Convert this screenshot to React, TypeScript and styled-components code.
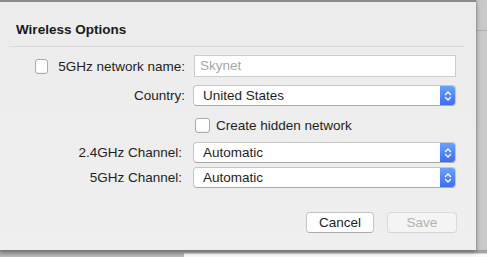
import React from 'react';
import styled, { createGlobalStyle } from 'styled-components';

const GlobalStyle = createGlobalStyle`
  html, body {
    margin: 0;
    padding: 0;
    background: #c6c6c6;
    font-family: "Liberation Sans", Arial, sans-serif;
    -webkit-font-smoothing: antialiased;
  }
`;

const Backdrop = styled.div`
  width: 487px;
  height: 257px;
  display: flex;
  flex-direction: column;
  overflow: hidden;
  background: #c6c6c6;
`;

const TopArea = styled.div`
  display: flex;
  height: 250px;
`;

const SideStrip = styled.div`
  flex: 1;
  border-left: 1px solid #b4b4b4;
  background: #c9c9c9;
`;

const SideRule = styled.div`
  height: 30px;
  border-bottom: 1px solid #aeaeae;
`;

const BottomStrip = styled.div`
  flex: 1;
  display: flex;
  padding-top: 3px;
  padding-left: 184px;
  background: linear-gradient(#9c9c9c, #bcbcbc);
`;

const BehindPanel = styled.div`
  flex: 1;
  background: #fafafa;
  border-top: 1px solid #d0d0d0;
`;

const Sheet = styled.div`
  position: relative;
  z-index: 1;
  width: 476px;
  box-sizing: border-box;
  border-top: 2px solid #8c8c8c;
  background: linear-gradient(#ececec, #efefef);
  box-shadow: 0 2px 5px rgba(0, 0, 0, 0.35);
  display: flex;
  flex-direction: column;
  color: #1e1e1e;
  font-size: 13.5px;
`;

const Title = styled.h2`
  margin: 0;
  padding: 20px 0 0 16px;
  height: 24px;
  font-size: 13.5px;
  font-weight: bold;
  line-height: 16px;
  color: #1a1a1a;
`;

const Divider = styled.hr`
  margin: 0 11px 0 9px;
  border: none;
  border-top: 1px solid #d9d9d9;
  height: 0;
`;

const Form = styled.div`
  display: flex;
  flex-direction: column;
  padding-top: 8px;
`;

const Row = styled.div<{ $gap: number; $h: number }>`
  display: grid;
  grid-template-columns: 185px 263px;
  column-gap: 8px;
  align-items: center;
  height: ${p => p.$h}px;
  margin-top: ${p => p.$gap}px;
`;

const Label = styled.label<{ $pad?: number }>`
  text-align: right;
  white-space: nowrap;
  padding-right: ${p => p.$pad ?? 0}px;
`;

const CheckLabel = styled.label`
  display: flex;
  align-items: center;
  padding-left: 35px;
  gap: 10px;
  white-space: nowrap;
`;

const Box = styled.span`
  display: inline-block;
  width: 13px;
  height: 13px;
  border: 1px solid #ababab;
  border-radius: 3px;
  background: #fff;
  box-shadow: inset 0 -1px 0 #f0f0f0;
`;

const TextInput = styled.div`
  margin-left: 1px;
  height: 22px;
  box-sizing: border-box;
  border: 1px solid #cdcdcd;
  background: #fff;
  padding-left: 5px;
  line-height: 20px;
  color: #a8a8a8;
`;

const Select = styled.div`
  display: flex;
  height: 21px;
  box-sizing: border-box;
  border: 1px solid #c6c6c6;
  border-bottom-color: #a9a9a9;
  border-radius: 4px;
  background: #fff;
  overflow: hidden;
`;

const SelectValue = styled.span`
  flex: 1;
  padding-left: 9px;
  line-height: 19px;
`;

const Stepper = styled.span`
  width: 16px;
  display: flex;
  align-items: center;
  justify-content: center;
  margin: -1px -1px -1px 0;
  border-radius: 0 4px 4px 0;
  background: linear-gradient(#6aa5fc, #3c69f4);
`;

const CheckRow = styled.label`
  display: flex;
  align-items: center;
  gap: 6px;
  padding-left: 2px;
  white-space: nowrap;
`;

const Footer = styled.div`
  display: flex;
  justify-content: flex-end;
  gap: 13px;
  padding: 24px 19px 0 0;
`;

const Button = styled.button<{ $disabled?: boolean }>`
  height: 21px;
  width: ${p => (p.$disabled ? 70 : 68)}px;
  box-sizing: border-box;
  border: 1px solid ${p => (p.$disabled ? '#dadada' : '#c4c4c4')};
  border-bottom-color: ${p => (p.$disabled ? '#d4d4d4' : '#acacac')};
  border-radius: 4px;
  background: ${p => (p.$disabled ? '#f4f4f4' : '#fff')};
  color: ${p => (p.$disabled ? '#b2b2b2' : '#1e1e1e')};
  font-family: inherit;
  font-size: 13.5px;
  padding: 0;
  line-height: 19px;
`;

const Chevrons = () => (
  <svg width="8" height="12" viewBox="0 0 8 12">
    <path d="M1.5 4.5 L4 2 L6.5 4.5 M1.5 7.5 L4 10 L6.5 7.5" stroke="#fff" strokeWidth="1.3" fill="none" strokeLinecap="round" strokeLinejoin="round" />
  </svg>
);

const Dropdown = ({ value }: { value: string }) => (
  <Select>
    <SelectValue>{value}</SelectValue>
    <Stepper><Chevrons /></Stepper>
  </Select>
);

const App = () => {
  return (
    <>
      <GlobalStyle />
      <Backdrop>
        <TopArea>
          <Sheet>
            <Title>Wireless Options</Title>
            <Divider />
            <Form>
              <Row $gap={0} $h={22}>
                <CheckLabel><Box />5GHz network name:</CheckLabel>
                <TextInput>Skynet</TextInput>
              </Row>
              <Row $gap={8} $h={21}>
                <Label>Country:</Label>
                <Dropdown value="United States" />
              </Row>
              <Row $gap={8} $h={22}>
                <span />
                <CheckRow><Box />Create hidden network</CheckRow>
              </Row>
              <Row $gap={6} $h={21}>
                <Label $pad={3}>2.4GHz Channel:</Label>
                <Dropdown value="Automatic" />
              </Row>
              <Row $gap={4} $h={21}>
                <Label $pad={3}>5GHz Channel:</Label>
                <Dropdown value="Automatic" />
              </Row>
            </Form>
            <Footer>
              <Button>Cancel</Button>
              <Button $disabled>Save</Button>
            </Footer>
          </Sheet>
          <SideStrip><SideRule /></SideStrip>
        </TopArea>
        <BottomStrip><BehindPanel /></BottomStrip>
      </Backdrop>
    </>
  );
};

export default App;
